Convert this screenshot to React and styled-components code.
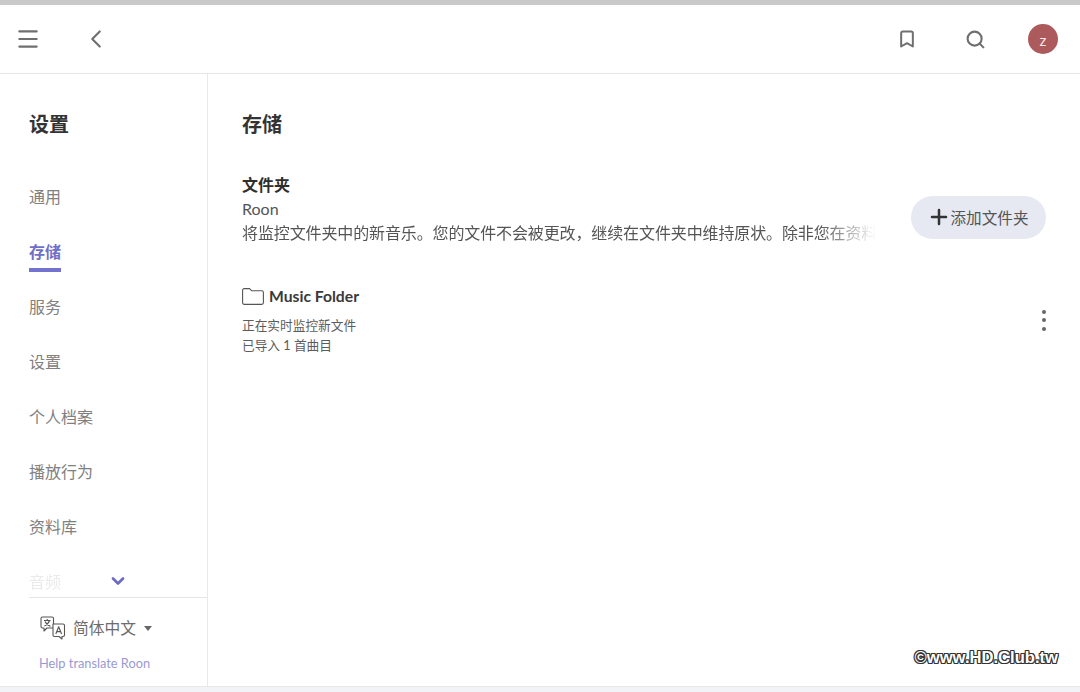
import React from "react";
import styled, { createGlobalStyle } from "styled-components";
import { Menu, ChevronLeft, ChevronDown, Bookmark, Search, Plus } from "lucide-react";

const GlobalStyle = createGlobalStyle`
  html, body { margin: 0; padding: 0; background: #fff; }
  body { font-family: Lato, "Noto Sans CJK SC", sans-serif; color: #333; }
`;

const Page = styled.div`
  position: relative;
  width: 1080px;
  height: 692px;
  display: flex;
  flex-direction: column;
  overflow: hidden;
  background: #fff;
`;

const TopStrip = styled.div`
  height: 5px;
  background: #c9c9c9;
  flex: none;
`;

const Header = styled.header`
  height: 69px;
  flex: none;
  display: flex;
  align-items: center;
  padding: 0 22px 0 15px;
  border-bottom: 1px solid #e6e6e6;
  box-sizing: border-box;
  color: #6f6f6f;
`;

const HeaderLeft = styled.div`
  display: flex;
  align-items: center;
  gap: 40px;
  flex: 1;
`;

const HeaderRight = styled.div`
  display: flex;
  align-items: center;
  gap: 38px;
`;

const HeaderSlot = styled.div`
  width: 30px;
  height: 30px;
  display: flex;
  align-items: center;
  justify-content: center;
`;

const Avatar = styled(HeaderSlot)`
  border-radius: 50%;
  background: #ad5a5c;
  color: #fbe9e9;
  font-size: 15px;
  padding-top: 2px;
  box-sizing: border-box;
`;

const Body = styled.div`
  flex: 1;
  display: flex;
  min-height: 0;
`;

const Sidebar = styled.aside`
  width: 208px;
  flex: none;
  box-sizing: border-box;
  border-right: 1px solid #e9e9e9;
  display: flex;
  flex-direction: column;
`;

const SidebarTitle = styled.h1`
  margin: 0;
  padding: 35px 0 0 29px;
  height: 100px;
  box-sizing: border-box;
  font-size: 20px;
  line-height: 30px;
  font-weight: 700;
  color: #333;
`;

const NavList = styled.nav`
  position: relative;
  flex: 1;
  min-height: 0;
  overflow: hidden;
  padding: 11px 0 0 29px;
  display: flex;
  flex-direction: column;
`;

const NavItem = styled.div`
  height: 55px;
  flex: none;
  font-size: 16px;
  line-height: 24px;
  color: ${(p) => (p.$active ? "#6f6fc9" : "#808080")};
  font-weight: ${(p) => (p.$active ? 700 : 400)};
  opacity: ${(p) => (p.$faded ? 0.16 : 1)};
`;

const NavLabel = styled.span`
  display: inline-block;
  padding-bottom: 4px;
  border-bottom: ${(p) => (p.$active ? "4px solid #7373cf" : "none")};
`;

const MoreChevron = styled.div`
  position: absolute;
  left: 108px;
  bottom: 6px;
  color: #6b6bc4;
  display: flex;
`;

const LangSection = styled.div`
  height: 89px;
  flex: none;
  margin-left: 29px;
  border-top: 1px solid #e6e6e6;
  box-sizing: border-box;
  padding: 17px 0 0 10px;
`;

const LangRow = styled.div`
  display: flex;
  align-items: center;
  gap: 6px;
  font-size: 15.75px;
  line-height: 26px;
  color: #6c6c6c;
`;

const Caret = styled.span`
  width: 0;
  height: 0;
  margin-left: 2px;
  border-left: 4.5px solid transparent;
  border-right: 4.5px solid transparent;
  border-top: 5px solid #666;
`;

const HelpLink = styled.div`
  margin-top: 13px;
  font-size: 12.8px;
  line-height: 18px;
  color: #9a9ad2;
`;

const Main = styled.main`
  flex: 1;
  min-width: 0;
  padding: 35px 34px 0 34px;
`;

const PageTitle = styled.h2`
  margin: 0 0 34px;
  font-size: 20px;
  line-height: 30px;
  font-weight: 700;
  color: #333;
`;

const SectionRow = styled.section`
  display: flex;
  align-items: center;
  justify-content: space-between;
`;

const SectionText = styled.div`
  width: 634px;
  overflow: hidden;
  position: relative;
`;

const SectionTitle = styled.div`
  font-size: 16px;
  line-height: 24px;
  font-weight: 700;
  color: #2e2e2e;
`;

const SectionLine = styled.div`
  font-size: 16px;
  line-height: 23.5px;
  color: #555;
  white-space: nowrap;
  letter-spacing: ${(p) => (p.$fade ? "-0.12px" : "0")};
  -webkit-mask-image: ${(p) => (p.$fade ? "linear-gradient(to right, #000 91%, transparent 100%)" : "none")};
  mask-image: ${(p) => (p.$fade ? "linear-gradient(to right, #000 91%, transparent 100%)" : "none")};
`;

const AddButton = styled.button`
  width: 135px;
  height: 43px;
  border: none;
  border-radius: 22px;
  background: #e6e9f2;
  color: #555;
  font-family: inherit;
  font-size: 15.6px;
  display: flex;
  align-items: center;
  justify-content: center;
  gap: 0;
  padding: 0 2px 0 0;
  margin-top: 17px;
`;

const FolderRow = styled.div`
  margin-top: 40px;
  display: flex;
  align-items: center;
  justify-content: space-between;
`;

const FolderName = styled.div`
  display: flex;
  align-items: center;
  gap: 5px;
  font-size: 15.7px;
  line-height: 24px;
  font-weight: 700;
  color: #3a3a3a;
`;

const FolderMeta = styled.div`
  margin-top: 8px;
  font-size: 12.7px;
  line-height: 19.5px;
  color: #5c5c5c;
`;

const Dots = styled.div`
  display: flex;
  flex-direction: column;
  gap: 4.5px;
  margin-top: 1px;
`;

const Dot = styled.span`
  width: 4px;
  height: 4px;
  border-radius: 50%;
  background: #666;
`;

const BottomStrip = styled.div`
  height: 6px;
  flex: none;
  background: #f2f3f6;
  border-top: 1px solid #e8e8e8;
  box-sizing: border-box;
`;

const Watermark = styled.div`
  position: absolute;
  right: 22px;
  top: 648px;
  font-family: "Liberation Sans", sans-serif;
  font-size: 16.6px;
  line-height: 20px;
  font-weight: 700;
  color: #fff;
  text-shadow: -1px -1px 0 #333, 1px -1px 0 #333, -1px 1px 0 #333, 1px 1px 0 #333, 0 1px 0 #333, 1px 0 0 #333, 0 -1px 0 #333, -1px 0 0 #333;
`;

const TranslateIcon = () => (
  <svg width="28" height="24" viewBox="0 0 28 24" fill="none" stroke="#555" strokeWidth="1.1" strokeLinejoin="round">
    <path d="M2 2.5 a1.5 1.5 0 0 1 1.5-1.5 H13 a1.5 1.5 0 0 1 1.5 1.5 V12 H8 L5 15 V12 H3.5 A1.5 1.5 0 0 1 2 10.5 Z" fill="#fff" />
    <path d="M5 4.5 H11.5 M8.2 3 V4.5 M5.5 10 C8 8.5 10 6.5 10.5 4.5 M6 5.5 C7 7.5 9 9.5 11.5 10.2" />
    <path d="M14 8 H24 a1.5 1.5 0 0 1 1.5 1.5 V19 a1.5 1.5 0 0 1-1.5 1.5 H23 V23 L20 20.5 H15.5 A1.5 1.5 0 0 1 14 19 Z" fill="#fff" />
    <path d="M16.8 18 L19.7 10.8 L22.6 18 M17.9 15.6 H21.5" />
  </svg>
);

const FolderIcon = () => (
  <svg width="22" height="17" viewBox="0 0 22 17" fill="none" stroke="#555" strokeWidth="1.1" strokeLinejoin="round">
    <path d="M0.6 2.2 a1.6 1.6 0 0 1 1.6-1.6 H7.6 L9.8 2.8 H19.8 a1.6 1.6 0 0 1 1.6 1.6 V14.8 a1.6 1.6 0 0 1-1.6 1.6 H2.2 a1.6 1.6 0 0 1-1.6-1.6 Z" />
  </svg>
);

const navItems = ["通用", "存储", "服务", "设置", "个人档案", "播放行为", "资料库", "音频"];

export default function App() {
  return (
    <Page>
      <GlobalStyle />
      <TopStrip />
      <Header>
        <HeaderLeft>
          <Menu size={26} strokeWidth={2} />
          <ChevronLeft size={30} strokeWidth={1.7} />
        </HeaderLeft>
        <HeaderRight>
          <HeaderSlot>
            <Bookmark size={20} strokeWidth={2.4} />
          </HeaderSlot>
          <HeaderSlot>
            <Search size={21} strokeWidth={2.4} />
          </HeaderSlot>
          <Avatar>z</Avatar>
        </HeaderRight>
      </Header>
      <Body>
        <Sidebar>
          <SidebarTitle>设置</SidebarTitle>
          <NavList>
            {navItems.map((item) => (
              <NavItem key={item} $active={item === "存储"} $faded={item === "音频"}>
                <NavLabel $active={item === "存储"}>{item}</NavLabel>
              </NavItem>
            ))}
            <MoreChevron>
              <ChevronDown size={20} strokeWidth={3.2} />
            </MoreChevron>
          </NavList>
          <LangSection>
            <LangRow>
              <TranslateIcon />
              简体中文
              <Caret />
            </LangRow>
            <HelpLink>Help translate Roon</HelpLink>
          </LangSection>
        </Sidebar>
        <Main>
          <PageTitle>存储</PageTitle>
          <SectionRow>
            <SectionText>
              <SectionTitle>文件夹</SectionTitle>
              <SectionLine>Roon</SectionLine>
              <SectionLine $fade>将监控文件夹中的新音乐。您的文件不会被更改，继续在文件夹中维持原状。除非您在资料库中删除它们</SectionLine>
            </SectionText>
            <AddButton>
              <Plus size={24} strokeWidth={2.5} color="#333" />
              添加文件夹
            </AddButton>
          </SectionRow>
          <FolderRow>
            <div>
              <FolderName>
                <FolderIcon />
                Music Folder
              </FolderName>
              <FolderMeta>
                正在实时监控新文件
                <br />
                已导入 1 首曲目
              </FolderMeta>
            </div>
            <Dots>
              <Dot />
              <Dot />
              <Dot />
            </Dots>
          </FolderRow>
        </Main>
      </Body>
      <BottomStrip />
      <Watermark>©www.HD.Club.tw</Watermark>
    </Page>
  );
}
